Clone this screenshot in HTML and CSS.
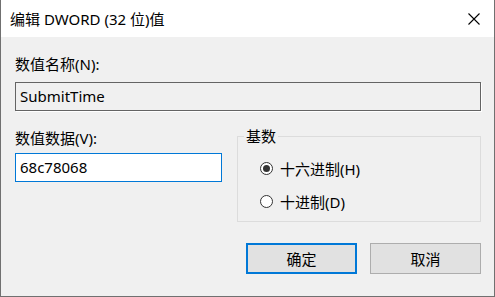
FILE: index.html
```html
<!DOCTYPE html>
<html lang="zh-CN">
<head>
    <meta charset="UTF-8">
    <title>编辑 DWORD (32 位)值</title>
    <link rel="stylesheet" href="styles.css">
</head>
<body>
    <div class="dialog">
        <div class="title-bar">
            <span class="title">编辑 DWORD (32 位)值</span>
            <svg class="close" width="12" height="12" viewBox="0 0 12 12">
                <path d="M0.5 0.5 L11.5 11.5 M11.5 0.5 L0.5 11.5" stroke="#000" stroke-width="1.1" fill="none"/>
            </svg>
        </div>
        <div class="content">
            <div class="label first">数值名称(N):</div>
            <div class="field readonly">SubmitTime</div>

            <div class="row">
                <div class="data-col">
                    <div class="label">数值数据(V):</div>
                    <div class="field active">68c78068</div>
                </div>
                <fieldset class="base">
                    <legend>基数</legend>
                    <div class="radio first-radio">
                        <span class="radio-dot checked"></span>
                        <span>十六进制(H)</span>
                    </div>
                    <div class="radio">
                        <span class="radio-dot"></span>
                        <span>十进制(D)</span>
                    </div>
                </fieldset>
            </div>

            <div class="buttons">
                <div class="btn primary">确定</div>
                <div class="btn">取消</div>
            </div>
        </div>
    </div>
</body>
</html>
```

FILE: styles.css
```css
:root {
    --dialog-bg: #f0f0f0;
    --border-color: #707070;
    --accent-color: #0078d7;
    --button-bg: #e1e1e1;
    --button-border: #adadad;
    --group-border: #dcdcdc;
}

* {
    box-sizing: border-box;
}

body {
    margin: 0;
    font-family: "Noto Sans", "Noto Sans CJK SC", sans-serif;
    font-size: 15px;
    color: #000;
    background: #fff;
}

.dialog {
    width: 495px;
    height: 297px;
    background: var(--dialog-bg);
    border: 1px solid var(--border-color);
    border-top: none;
    display: flex;
    flex-direction: column;
}

.title-bar {
    height: 37px;
    background: #fff;
    display: flex;
    align-items: center;
    justify-content: space-between;
    padding: 0 14px 0 9px;
}

.title {
    line-height: 20px;
}

.close {
    display: block;
    margin-top: 1px;
}

.content {
    padding: 17px 13px 0 14px;
}

.label {
    line-height: 20px;
    height: 20px;
}

.label.first {
    margin-bottom: 8px;
}

.field {
    height: 29px;
    line-height: 27px;
    padding: 0 4px;
    border: 1px solid #646464;
}

.field.readonly {
    background: var(--dialog-bg);
    box-shadow: 1px 1px 0 #fff;
}

.field.active {
    background: #fff;
    border-color: var(--accent-color);
    margin-top: 5px;
}

.row {
    display: flex;
    gap: 15px;
    margin-top: 17px;
}

.data-col {
    width: 207px;
}

.base {
    flex: 1;
    margin: 0;
    padding: 0 0 10px 6px;
    border: 1px solid var(--group-border);
}

.base legend {
    padding: 0 2px;
    line-height: 16px;
}

.radio {
    display: flex;
    align-items: center;
    height: 20px;
    gap: 7px;
    padding-left: 16px;
    margin-top: 13px;
}

.radio.first-radio {
    margin-top: 14px;
}

.radio-dot {
    width: 13px;
    height: 13px;
    border: 1px solid #333;
    border-radius: 50%;
    background: #fff;
    display: flex;
    align-items: center;
    justify-content: center;
}

.radio-dot.checked::after {
    content: "";
    width: 7px;
    height: 7px;
    border-radius: 50%;
    background: #333;
}

.buttons {
    display: flex;
    justify-content: flex-end;
    gap: 13px;
    margin-top: 21px;
}

.btn {
    width: 111px;
    height: 31px;
    background: var(--button-bg);
    border: 1px solid var(--button-border);
    display: flex;
    align-items: center;
    justify-content: center;
}

.btn.primary {
    border: 2px solid var(--accent-color);
}
```
